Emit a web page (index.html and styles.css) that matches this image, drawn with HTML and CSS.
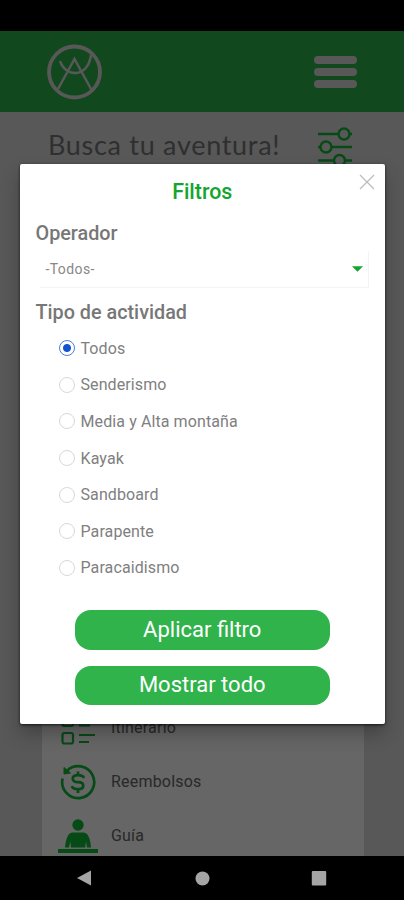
FILE: index.html
```html
<!DOCTYPE html>
<html lang="es">
<head>
    <meta charset="UTF-8">
    <meta name="viewport" content="width=device-width, initial-scale=1.0">
    <title>Busca tu aventura</title>
    <link rel="stylesheet" href="styles.css">
</head>
<body>

    <div class="phone">
        <div class="status-bar"></div>

        <div class="page">
            <header class="header">
                <svg class="logo" viewBox="0 0 56 56" fill="none" stroke="currentColor">
                    <circle cx="28.5" cy="28" r="25.5" stroke-width="3.8"/>
                    <path d="M12 45 L28.5 15 L45 45" stroke-width="2.5"/>
                    <path d="M14 17 C20 34 42 34 45 11" stroke-width="2.5"/>
                </svg>
                <div class="menu">
                    <span></span>
                    <span></span>
                    <span></span>
                </div>
            </header>

            <div class="search-row">
                <h1 class="search-title">Busca tu aventura!</h1>
                <svg class="filter-icon" viewBox="0 0 36 40" fill="none" stroke="currentColor" stroke-width="2.4">
                    <path d="M1 7h20M33 7h2M1 20h2M14 20h21M1 33.5h16M28 33.5h7"/>
                    <circle cx="27" cy="7" r="5.5"/>
                    <circle cx="9" cy="20" r="5.5"/>
                    <circle cx="22.5" cy="33.5" r="5.5"/>
                </svg>
            </div>

            <div class="card">
                <div class="card-item">
                    <svg class="card-icon" viewBox="0 0 40 36" fill="none" stroke="currentColor" stroke-width="2.2">
                        <rect x="4.5" y="5.5" width="10.5" height="10.5" rx="2"/>
                        <rect x="4.5" y="23" width="10.5" height="10.5" rx="2"/>
                        <path d="M21 8h16M21 15.5h11M21 25h16M21 32h10"/>
                    </svg>
                    <span>Itinerario</span>
                </div>
                <div class="card-item">
                    <svg class="card-icon" viewBox="0 0 40 36" fill="none" stroke="currentColor" stroke-width="2.7">
                        <path d="M4.6 14.5 A16 16 0 1 0 9 6.7"/>
                        <path d="M6 3.5 L6 10 L12.5 9 Z" fill="currentColor" stroke-width="1"/>
                        <path d="M26 14c-.8-2-2.5-2.8-6-2.8-7 0-7 7 0 7s7 7 0 7c-3.7 0-5.5-.8-6.200-3M20 7.5v4M20 25v4"/>
                    </svg>
                    <span>Reembolsos</span>
                </div>
                <div class="card-item">
                    <svg class="card-icon" viewBox="0 0 40 36" fill="currentColor">
                        <circle cx="20" cy="7" r="5.7"/>
                        <path d="M7 29.500c1-9 3-15 8-15h10c5 0 7.500 6 8 15h-4l-1-6-.8 6H13l-.8-6-1.200 6Z"/>
                        <rect x="0" y="31" width="40" height="4"/>
                    </svg>
                    <span>Guía</span>
                </div>
            </div>

            <div class="overlay">
                <div class="modal">
                    <svg class="close" viewBox="0 0 16 16" stroke="currentColor" stroke-width="1.2">
                        <path d="M1 1 L15 15 M15 1 L1 15"/>
                    </svg>
                    <h2 class="modal-title">Filtros</h2>

                    <h3 class="label">Operador</h3>
                    <div class="select">
                        <span>-Todos-</span>
                        <svg class="arrow" viewBox="0 0 12 6" fill="currentColor"><path d="M0 0h12L6 6Z"/></svg>
                    </div>

                    <h3 class="label">Tipo de actividad</h3>
                    <div class="options">
                        <div class="option"><span class="radio checked"></span><span>Todos</span></div>
                        <div class="option"><span class="radio"></span><span>Senderismo</span></div>
                        <div class="option"><span class="radio"></span><span>Media y Alta montaña</span></div>
                        <div class="option"><span class="radio"></span><span>Kayak</span></div>
                        <div class="option"><span class="radio"></span><span>Sandboard</span></div>
                        <div class="option"><span class="radio"></span><span>Parapente</span></div>
                        <div class="option"><span class="radio"></span><span>Paracaidismo</span></div>
                    </div>

                    <div class="buttons">
                        <button>Aplicar filtro</button>
                        <button>Mostrar todo</button>
                    </div>
                </div>
            </div>
        </div>

        <div class="nav-bar">
            <svg viewBox="0 0 16 16"><path d="M15 0.5V15.5L1 8Z"/></svg>
            <svg viewBox="0 0 16 16"><circle cx="8.5" cy="8.5" r="7"/></svg>
            <svg viewBox="0 0 16 16"><rect x="0.8" y="1" width="14.4" height="14.4" rx="1"/></svg>
        </div>
    </div>

</body>
</html>
```
FILE: styles.css
```css
* {
    box-sizing: border-box;
}

body {
    margin: 0;
    font-family: Roboto, "Liberation Sans", sans-serif;
    background: #000;
}

h1, h2, h3 {
    margin: 0;
}

.phone {
    display: flex;
    flex-direction: column;
    width: 404px;
    height: 900px;
    overflow: hidden;
}

.status-bar {
    height: 31px;
    flex-shrink: 0;
}

.page {
    position: relative;
    flex: 1;
    display: flex;
    flex-direction: column;
    overflow: hidden;
    background: #dcdcdc;
}

.header {
    display: flex;
    align-items: center;
    justify-content: space-between;
    height: 81px;
    flex-shrink: 0;
    padding: 0 47px 0 46px;
    background: #2fb34a;
    color: #dcdcdc;
}

.logo {
    width: 56px;
    height: 56px;
}

.menu {
    display: flex;
    flex-direction: column;
    gap: 4px;
    width: 43px;
}

.menu span {
    height: 8px;
    border-radius: 4px;
    background: #dcdcdc;
}

.search-row {
    display: flex;
    justify-content: space-between;
    height: 602px;
    flex-shrink: 0;
    padding: 15px 51px 0 48px;
}

.search-title {
    font-family: Lato, sans-serif;
    font-size: 27px;
    font-weight: 400;
    line-height: 36px;
    letter-spacing: 0.7px;
    white-space: nowrap;
    color: #777;
}

.filter-icon {
    width: 36px;
    height: 40px;
    color: #10b838;
}

.card {
    flex: 1;
    display: flex;
    flex-direction: column;
    gap: 18px;
    margin: -6px 40px 0 42px;
    padding: 1px 0 0 16px;
    background: #fff;
}

.card-item {
    display: flex;
    align-items: center;
    gap: 13px;
    height: 36px;
    flex-shrink: 0;
    font-size: 16px;
    letter-spacing: 0.2px;
    color: #666;
}

.card-icon {
    width: 40px;
    height: 36px;
    margin-top: 2px;
    color: #10b838;
}

/* Dimmed layer over the page */
.overlay {
    position: absolute;
    inset: 0;
    padding: 133px 19px 0 20px;
    background: rgba(0, 0, 0, 0.6);
}

.modal {
    position: relative;
    display: flex;
    flex-direction: column;
    height: 560px;
    padding: 14px 16px 0 15.5px;
    border-radius: 2px;
    background: #fff;
    color: #777;
    box-shadow: 0 1px 3px rgba(0, 0, 0, 0.7), 0 10px 18px rgba(0, 0, 0, 0.25);
}

.close {
    position: absolute;
    top: 10px;
    right: 10px;
    width: 16px;
    height: 16px;
    color: #bbb;
}

.modal-title {
    font-size: 21.4px;
    font-weight: 500;
    line-height: 28px;
    text-align: center;
    color: #14a52f;
}

.label {
    margin-top: 14px;
    font-size: 19.8px;
    font-weight: 500;
    line-height: 28px;
}

.select {
    display: flex;
    align-items: center;
    justify-content: space-between;
    height: 37px;
    margin: 3px 0 -3px 4px;
    padding: 0 5px 0 6px;
    border-right: 1px solid #f4f4f4;
    border-bottom: 1px solid #f4f4f4;
    font-size: 14px;
    letter-spacing: 0.4px;
    color: #888;
}

.arrow {
    width: 11px;
    height: 6px;
    color: #14a52f;
}

.options {
    display: flex;
    flex-direction: column;
    margin: 3px 0 0 23px;
}

.option {
    display: flex;
    align-items: center;
    gap: 6px;
    height: 36.6px;
    font-size: 16px;
    letter-spacing: 0.1px;
    color: #808080;
}

.radio {
    width: 16px;
    height: 16px;
    border: 1px solid #d8d8d8;
    border-radius: 50%;
}

.checked {
    border-color: #4a80e0;
    background: radial-gradient(circle, #1453d0 3.5px, #fff 4.5px);
}

.buttons {
    display: flex;
    flex-direction: column;
    gap: 16px;
    margin: 24px 39px 0;
}

button {
    height: 39.5px;
    padding: 0;
    border: none;
    border-radius: 16px;
    font-family: inherit;
    font-size: 22px;
    line-height: 38px;
    background: #2fb34a;
    color: #fff;
}

.nav-bar {
    display: flex;
    align-items: center;
    justify-content: space-between;
    height: 44px;
    flex-shrink: 0;
    padding: 0 77px 0 76px;
}

.nav-bar svg {
    width: 16px;
    height: 16px;
    fill: #a5a5a5;
}
```
